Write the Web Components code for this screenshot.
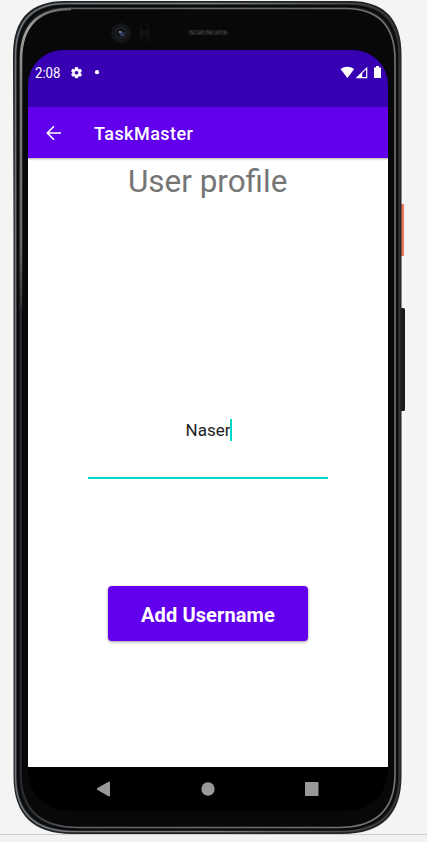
<!DOCTYPE html>
<html lang="en">
<head>
<meta charset="utf-8">
<title>TaskMaster</title>
<style>
html,body{margin:0;height:100%;overflow:hidden;background:#f4f4f4}
body{font-family:Roboto,"Liberation Sans",sans-serif}
</style>
</head>
<body>
<phone-device>
  <status-bar time="2:08"></status-bar>
  <tool-bar>TaskMaster</tool-bar>
  <profile-form heading="User profile">
    <name-field>Naser</name-field>
    <action-button>Add Username</action-button>
  </profile-form>
  <nav-bar></nav-bar>
</phone-device>
<script>
const define = (name, html) => customElements.define(name, class extends HTMLElement {
  constructor() {
    super();
    this.attachShadow({mode: 'open'}).innerHTML = html;
  }
  connectedCallback() {
    for (const el of this.shadowRoot.querySelectorAll('[data-attr]'))
      el.textContent = this.getAttribute(el.dataset.attr);
  }
});

define('phone-device', `
<style>
:host{display:grid;width:427px;height:842px;background:linear-gradient(#f4f4f4 834px,#cfcfcf 834px 835px,#f2f2f2 835px)}
svg,.screen{grid-area:1/1}
.screen{margin:50px 0 0 28px;width:360px;height:761px;display:grid;grid-template-rows:57px 51px 609px 44px;border-radius:35px 35px 40px 40px;overflow:hidden}
</style>
<svg width="427" height="842" viewBox="0 0 427 842">
  <defs>
    <linearGradient id="rim" x1="0" x2="1" y1="0" y2="0"><stop offset="0" stop-color="#6d717a"/><stop offset=".5" stop-color="#7d8480"/><stop offset="1" stop-color="#343434"/></linearGradient>
    <linearGradient id="inner" x1="0" x2="1" y1="0" y2="0"><stop offset="0" stop-color="#2c2c2e"/><stop offset=".15" stop-color="#626262"/><stop offset="1" stop-color="#747474"/></linearGradient>
    <linearGradient id="shine" gradientUnits="userSpaceOnUse" x1="0" x2="0" y1="9" y2="310"><stop offset="0" stop-color="#6a6b69"/><stop offset=".06" stop-color="#a3a5a2"/><stop offset=".25" stop-color="#7c7c7c"/><stop offset=".8" stop-color="#666"/><stop offset="1" stop-color="#2c2c2e"/></linearGradient>
    <linearGradient id="power" x1="0" x2="1" y1="0" y2="0"><stop offset="0" stop-color="#a84f38"/><stop offset=".5" stop-color="#f17b5c"/><stop offset="1" stop-color="#e97758"/></linearGradient>
  </defs>
  <rect x="400" y="204" width="4" height="52" rx="1" fill="url(#power)"/>
  <rect x="400" y="308" width="5" height="103" rx="1.5" fill="#1b1d1d"/>
  <path d="M13 55Q13 1 65 1H350Q401.500 1 401.500 55V776Q401.500 834 342 834H72Q13.500 834 13.500 776V230Z" fill="#202223"/>
  <path d="M15.500 56Q15.500 3.500 66 3.500H349Q399.500 3.500 399.500 56V776Q399.500 831.500 341 831.500H73Q15.500 831.500 15.500 776Z" fill="#202222" stroke="url(#rim)" stroke-width="1.600"/>
  <path d="M18 57Q18 6 67 6H348Q397 6 397 57V775Q397 829.500 339 829.500H76Q18 829.500 18 775Z" fill="#191a1b" stroke="#090a0b" stroke-width="2"/>
  <path d="M21 60Q21 8.500 71 8.500H345Q395 8.500 395 60V774Q395 827.500 338 827.500H79Q21 827.500 21 774Z" fill="#08080a" stroke="url(#inner)" stroke-width="1.600"/>
  <path d="M21 310V60Q21 9 71 9" fill="none" stroke="url(#shine)" stroke-width="2.600"/>
  <g fill="#141517"><circle cx="121" cy="33" r="10"/><rect x="140" y="23" width="9" height="20" rx="4.500" fill="#131315"/></g>
  <circle cx="121" cy="33" r="6" fill="#212327"/><circle cx="121" cy="33" r="4.500" fill="#101218"/><circle cx="122" cy="34" r="2.500" fill="#303856"/><circle cx="120" cy="32" r="1" fill="#aeb2ba"/>
  <circle cx="144.500" cy="27.500" r="3.500" fill="#09090b"/><circle cx="144.500" cy="38.500" r="3.500" fill="#09090b"/>
  <rect x="188" y="30" width="40" height="5" rx="2.500" fill="#1e1e1e"/>
  <path d="M190 31l4 3m4 0l5-3m4 0l5 3m4 0l4-3m4 0l2 3" stroke="#363636" stroke-width="1.500"/>
</svg>
<div class="screen"><slot></slot></div>`);

define('status-bar', `
<style>
:host{display:flex;box-sizing:border-box;padding:14px 7px 0 7px;height:57px;background:#3700b3;color:#fff;align-items:flex-start}
span{font-size:14px;line-height:18px;width:36px;white-space:nowrap;transform:scaleX(.94);transform-origin:0 0}
svg{display:block;fill:#fff}
.right{margin-left:auto}
</style>
<span data-attr="time"></span>
<svg width="34" height="18" viewBox="0 0 34 18"><g transform="translate(-1.200 2) scale(.56)"><path fill-rule="evenodd" stroke="#fff" stroke-width=".7" d="M19.140 12.940c.04-.3.060-.61.060-.94s-.02-.64-.07-.94l2.030-1.580a.49.49 0 0 0 .12-.61l-1.920-3.320a.49.49 0 0 0-.59-.22l-2.390.96c-.5-.38-1.030-.7-1.620-.94L14.400 2.810a.48.48 0 0 0-.48-.41h-3.840a.47.47 0 0 0-.47.41L9.250 5.350c-.59.24-1.130.57-1.620.94l-2.390-.96a.48.48 0 0 0-.59.22L2.740 8.870a.48.48 0 0 0 .12.61l2.030 1.580a6 6 0 0 0 0 1.880l-2.030 1.580a.49.49 0 0 0-.12.61l1.920 3.320c.12.22.37.29.59.22l2.390-.96c.5.38 1.030.7 1.620.94l.36 2.540c.05.24.24.41.48.41h3.840c.24 0 .44-.17.47-.41l.36-2.540c.59-.24 1.130-.56 1.620-.94l2.390.96c.22.080.47 0 .59-.22l1.920-3.320a.47.47 0 0 0-.12-.61zM12 15.600a3.600 3.600 0 1 1 0-7.200 3.600 3.600 0 0 1 0 7.200z"/></g><circle cx="26" cy="8.200" r="2.100"/></svg>
<svg class="right" width="41" height="18" viewBox="340 64 41 18"><path d="M340.500 69Q347.300 64.500 354.200 69L347.400 78z"/><path fill-rule="evenodd" d="M355.500 78.200L367.300 66.700V78.200zM362.200 77H366.100V69.500L362.200 73.200z"/><path d="M374 67.500h2V66h3v1.500h2V78h-7z"/></svg>`);

define('tool-bar', `
<style>
:host{display:flex;align-items:center;box-sizing:border-box;height:51px;padding:2px 0 0 18px;gap:33px;background:#6200ee;color:#fff;font-size:18px;font-weight:500;letter-spacing:.45px;position:relative;z-index:1;box-shadow:0 1px 2px #0005}
svg{display:block;margin-top:-2px}
</style>
<svg width="15" height="16" viewBox="0 0 15 16" fill="none" stroke="#fff" stroke-width="1.600"><path d="M15 8H1.500M8 1.200L1.300 8L8 14.800"/></svg>
<span><slot></slot></span>`);

define('profile-form', `
<style>
:host{display:flex;flex-direction:column;align-items:center;background:#fff}
h1{margin:4px 0 0;font-weight:400;font-size:32px;line-height:38px;color:#757575;white-space:nowrap;transform:translateX(-.5px) scaleX(.982)}
::slotted(name-field){margin-top:218px}
::slotted(action-button){margin-top:107px}
</style>
<h1 data-attr="heading"></h1><slot></slot>`);

define('name-field', `
<style>
:host{display:flex;justify-content:center;align-items:flex-start;box-sizing:border-box;width:240px;height:61px;padding-left:2px;border-bottom:2px solid #03dac5;color:#212121;font-size:17px;line-height:25px}
i{width:2px;height:22px;margin-top:1px;background:#03dac5}
</style>
<span><slot></slot></span><i></i>`);

define('action-button', `
<style>
:host{display:block}
button{display:block;width:200px;height:55px;padding:2px 0 0;border:0;border-radius:4px;background:#6200ee;color:#fff;font:700 20px Roboto,sans-serif;letter-spacing:.12px;box-shadow:0 1px 3px #0006}
</style>
<button><slot></slot></button>`);

define('nav-bar', `
<style>
:host{display:flex;justify-content:space-between;align-items:center;box-sizing:border-box;padding:0 69px 0 68px;background:#000;height:44px}
svg{display:block;fill:#999}
</style>
<svg width="15" height="16"><path d="M14 1v14Q13 15.500 12 15L1.200 8.700Q.3 8 1.200 7.300L12 1Q13 .5 14 1z"/></svg>
<svg width="14" height="14"><circle cx="7" cy="7" r="6.700"/></svg>
<svg width="14" height="14"><rect width="13.500" height="14" rx=".7"/></svg>`);
</script>
</body>
</html>
